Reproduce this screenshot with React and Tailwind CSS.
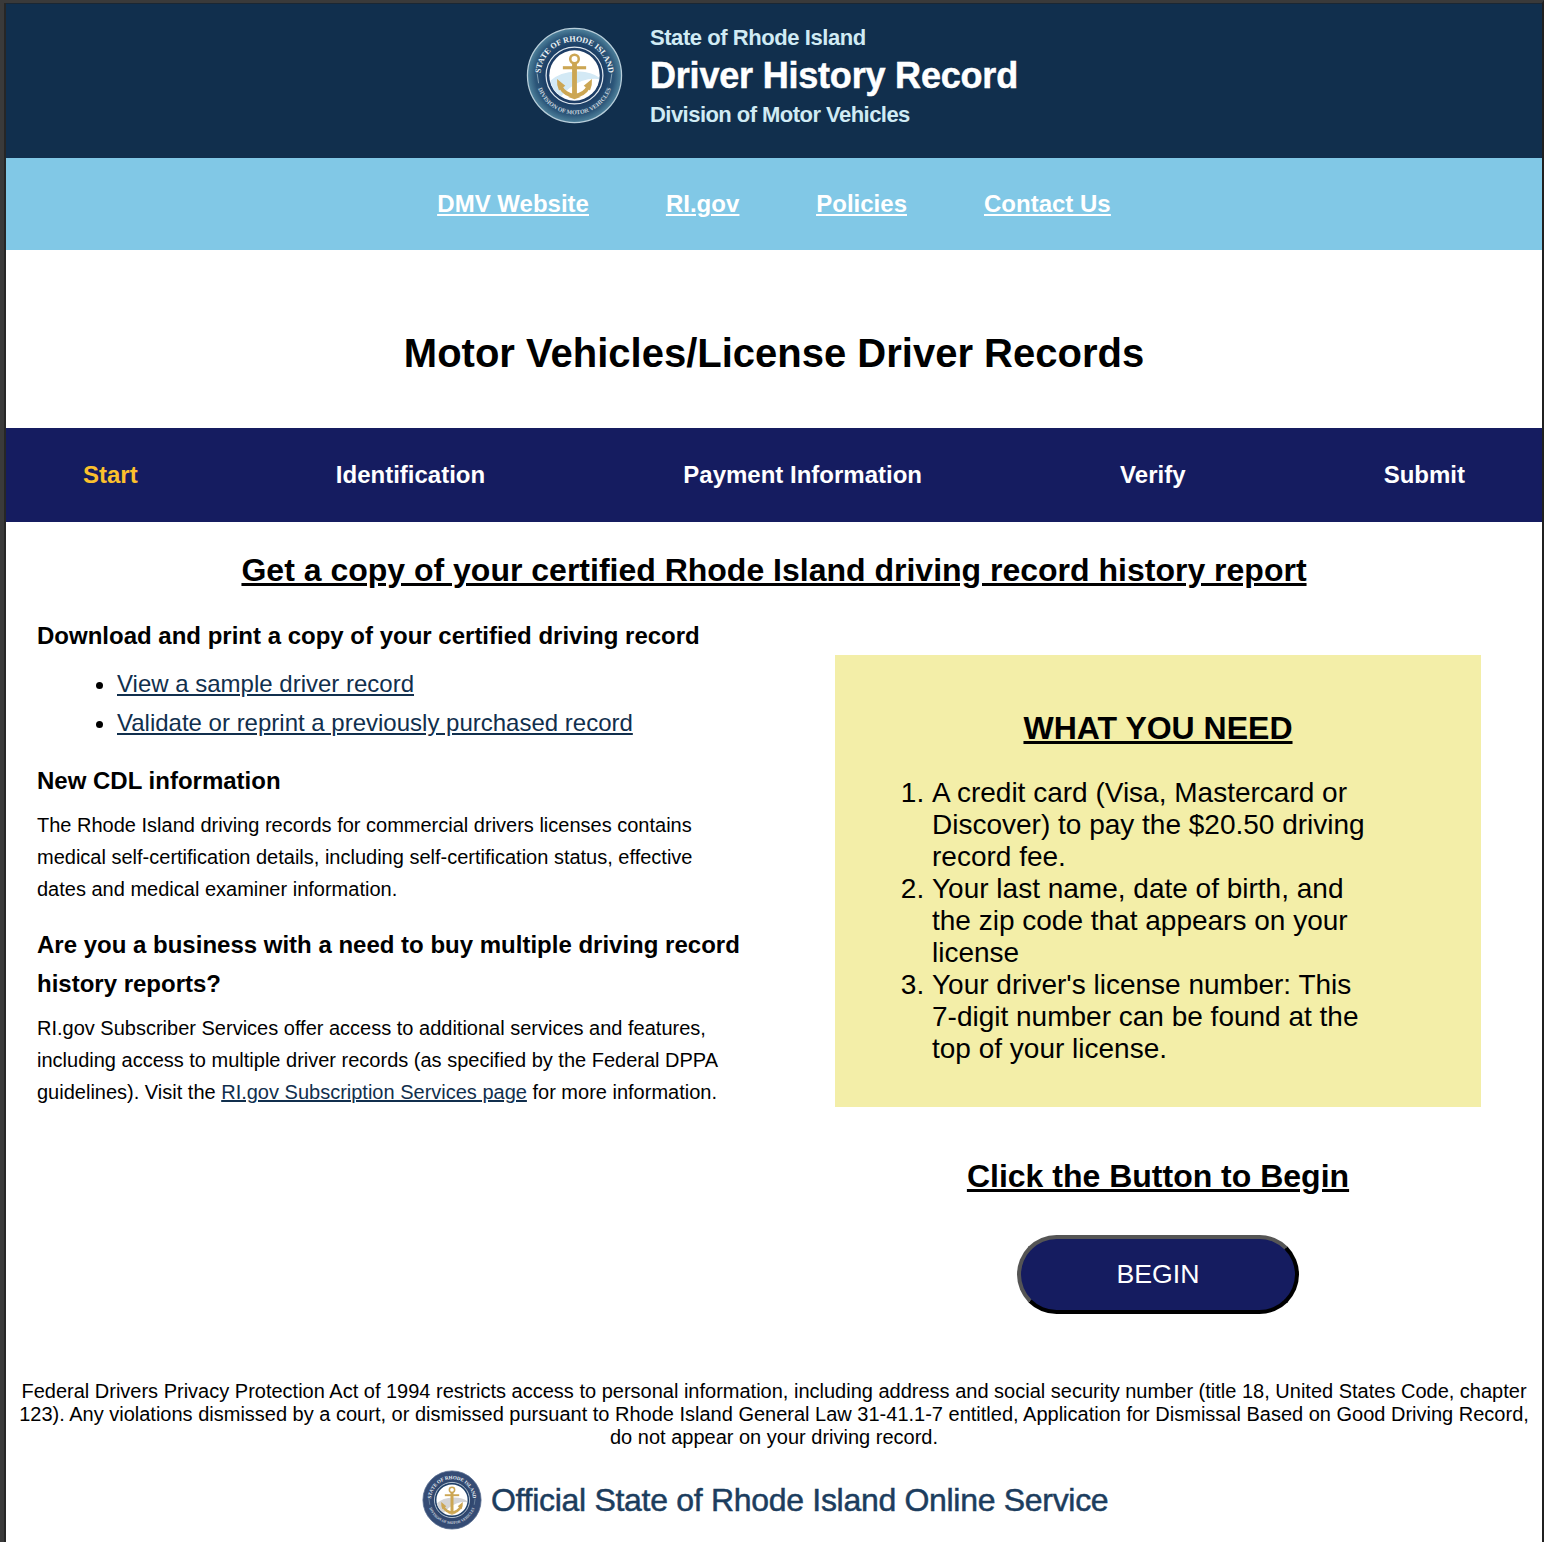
import React from "react";

function Seal({ size, ring, id, wave }) {
  return (
    <svg width={size} height={size} viewBox="0 0 100 100" className="shrink-0">
      <defs>
        <radialGradient id={id + "g"} cx="50%" cy="50%" r="50%">
          <stop offset="0.62" stopColor={ring[0]} />
          <stop offset="0.84" stopColor={ring[1]} />
          <stop offset="0.98" stopColor={ring[2]} />
        </radialGradient>
        <path id={id + "t"} d="M15 50 A35 35 0 0 1 85 50" />
        <path id={id + "b"} d="M10 50 A40 40 0 0 0 90 50" />
        <clipPath id={id + "c"}><circle cx="50" cy="50" r="25.5" /></clipPath>
      </defs>
      <circle cx="50" cy="50" r="48.5" fill={"url(#" + id + "g)"} stroke={ring[3]} strokeWidth="1.3" />
      <circle cx="50" cy="50" r="29.3" fill="#1d3d66" stroke="#dfe8ef" strokeWidth="1.3" />
      <circle cx="50" cy="50" r="26" fill="#fff" />
      <path clipPath={"url(#" + id + "c)"} fill={wave} d="M22 58 Q35 45 55 46 Q68 46 78 54 Q60 51 45 63 Q36 71 33 76 L20 70Z" />
      <g fill="none" stroke="#cca653">
        <circle cx="50" cy="33" r="4.4" strokeWidth="2.6" />
        <path d="M50 38V71" strokeWidth="5" />
        <path d="M38 42H62" strokeWidth="3.2" />
        <path d="M35.5 61.5Q40 70 50 71Q60 70 64.5 61.5" strokeWidth="4" />
      </g>
      <path fill="#cca653" d="M32 53.5L40.5 60.5L34 65.5Q31.500 60 32 53.5ZM68 53.5L59.5 60.5L66 65.5Q68.500 60 68 53.5ZM43 72L50 74.5L57 72Z" />
      <g fill="#eef4f7" fontFamily="Liberation Serif, serif" fontWeight="bold" textAnchor="middle">
        <text fontSize="8.3"><textPath href={"#" + id + "t"} startOffset="50%">STATE OF RHODE ISLAND</textPath></text>
        <text fontSize="6.2" opacity="0.8"><textPath href={"#" + id + "b"} startOffset="50%">DIVISION OF MOTOR VEHICLES</textPath></text>
      </g>
      <path d="M11.5 48L13 58M88.5 48L87 58" stroke="#9fb9c9" strokeWidth="0.8" />
    </svg>
  );
}

function Lines({ items }) {
  return items.map((t, i) => <span key={i} className="block whitespace-nowrap">{t}</span>);
}

export default function App() {
  return (
    <div className="h-[1542px] w-[1544px] overflow-hidden border-t-3 border-r-2 border-l-4 border-t-[#3a3a3a] border-r-[#202020] border-l-[#3a3a3a] bg-white font-['Liberation_Sans',Arial,sans-serif] text-black">
      <div className="h-full border-l-2 border-[#262626]">
        <header className="flex h-[155px] border-t border-[#1b2733] bg-[#112f4d] pl-[520px]">
          <div className="flex pt-[23px]">
            <Seal size={97} id="top" wave="#d3e9f5" ring={["#1c3e65", "#2c5679", "#4b7d98", "#b9cfdb"]} />
            <div className="ml-[27px] font-bold whitespace-nowrap text-[#d0ebf4]">
              <div className="-mt-[2px] text-[22px] leading-[26px] tracking-[-0.44px]">State of Rhode Island</div>
              <div className="mt-[5px] text-[36px] leading-[40px] tracking-[-0.2px] text-white [-webkit-text-stroke:0.5px_white]">Driver History Record</div>
              <div className="mt-[6px] text-[22px] leading-[26px] tracking-[-0.54px]">Division of Motor Vehicles</div>
            </div>
          </div>
        </header>
        <nav className="flex h-[92px] items-center justify-center gap-[77px] bg-[#81c8e6] text-2xl font-bold text-white underline">
          <a>DMV Website</a><a>RI.gov</a><a>Policies</a><a>Contact Us</a>
        </nav>
        <div className="flex h-[178px] items-center justify-center pt-7">
          <h1 className="text-[40px] font-bold whitespace-nowrap">Motor Vehicles/License Driver Records</h1>
        </div>
        <div className="flex h-[94px] items-center justify-between bg-[#151c60] px-[77px] text-2xl font-bold text-white">
          <span className="text-[#fbc02d]">Start</span><span>Identification</span><span>Payment Information</span><span>Verify</span><span>Submit</span>
        </div>
        <h2 className="pt-[29px] text-center text-[32px] leading-[39px] font-bold whitespace-nowrap underline">Get a copy of your certified Rhode Island driving record history report</h2>
        <main className="flex h-[790px] pt-[26px] pl-[31px]">
          <section className="w-[798px] text-xl leading-8">
            <h3 className="text-2xl leading-[39px] font-bold">Download and print a copy of your certified driving record</h3>
            <ul className="mt-[9px] text-2xl leading-[39px] text-[#112f4d]">
              <li className="flex items-center pl-[59px]"><i className="mt-[3px] mr-[14px] size-[7px] rounded-full bg-black" /><a className="underline">View a sample driver record</a></li>
              <li className="flex items-center pl-[59px]"><i className="mt-[3px] mr-[14px] size-[7px] rounded-full bg-black" /><a className="underline">Validate or reprint a previously purchased record</a></li>
            </ul>
            <h3 className="mt-[19px] text-2xl leading-[39px] font-bold">New CDL information</h3>
            <p className="mt-[9px]"><Lines items={["The Rhode Island driving records for commercial drivers licenses contains", "medical self-certification details, including self-certification status, effective", "dates and medical examiner information."]} /></p>
            <h3 className="mt-[20px] text-2xl leading-[39px] font-bold"><Lines items={["Are you a business with a need to buy multiple driving record", "history reports?"]} /></h3>
            <p className="mt-[9px]"><Lines items={["RI.gov Subscriber Services offer access to additional services and features,", "including access to multiple driver records (as specified by the Federal DPPA", <>guidelines). Visit the <a className="text-[#112f4d] underline">RI.gov Subscription Services page</a> for more information.</>]} /></p>
          </section>
          <section className="flex w-[646px] flex-col items-center pt-[39px]">
            <div className="h-[452px] w-full bg-[#f3eea8] pt-[53px]">
              <h2 className="text-center text-[32px] leading-[40px] font-bold underline">WHAT YOU NEED</h2>
              <ol className="mt-[29px] list-decimal pl-[97px] text-[28px] leading-8">
                <li><Lines items={["A credit card (Visa, Mastercard or", "Discover) to pay the $20.50 driving", "record fee."]} /></li>
                <li><Lines items={["Your last name, date of birth, and", "the zip code that appears on your", "license"]} /></li>
                <li><Lines items={["Your driver's license number: This", "7-digit number can be found at the", "top of your license."]} /></li>
              </ol>
            </div>
            <h2 className="mt-[49px] text-[32px] leading-[40px] font-bold underline">Click the Button to Begin</h2>
            <button className="mt-[39px] h-[79px] w-[282px] rounded-[40px] border-4 border-t-[#555] border-r-black border-b-black border-l-[#555] bg-[#151c60] pb-0.5 text-[26.67px] text-white">BEGIN</button>
          </section>
        </main>
        <footer className="text-center">
          <p className="text-xl leading-[23px]"><Lines items={["Federal Drivers Privacy Protection Act of 1994 restricts access to personal information, including address and social security number (title 18, United States Code, chapter", "123). Any violations dismissed by a court, or dismissed pursuant to Rhode Island General Law 31-41.1-7 entitled, Application for Dismissal Based on Good Driving Record,", "do not appear on your driving record."]} /></p>
          <div className="mt-[21px] flex items-center pl-[416px]">
            <Seal size={60} id="foot" wave="#d4d4d6" ring={["#2f466d", "#354c75", "#354c75", "#5c6f90"]} />
            <span className="ml-[9px] text-[32px] tracking-[-0.3px] whitespace-nowrap text-[#1c3d5e] [-webkit-text-stroke:0.5px_#1c3d5e]">Official State of Rhode Island Online Service</span>
          </div>
        </footer>
      </div>
    </div>
  );
}
